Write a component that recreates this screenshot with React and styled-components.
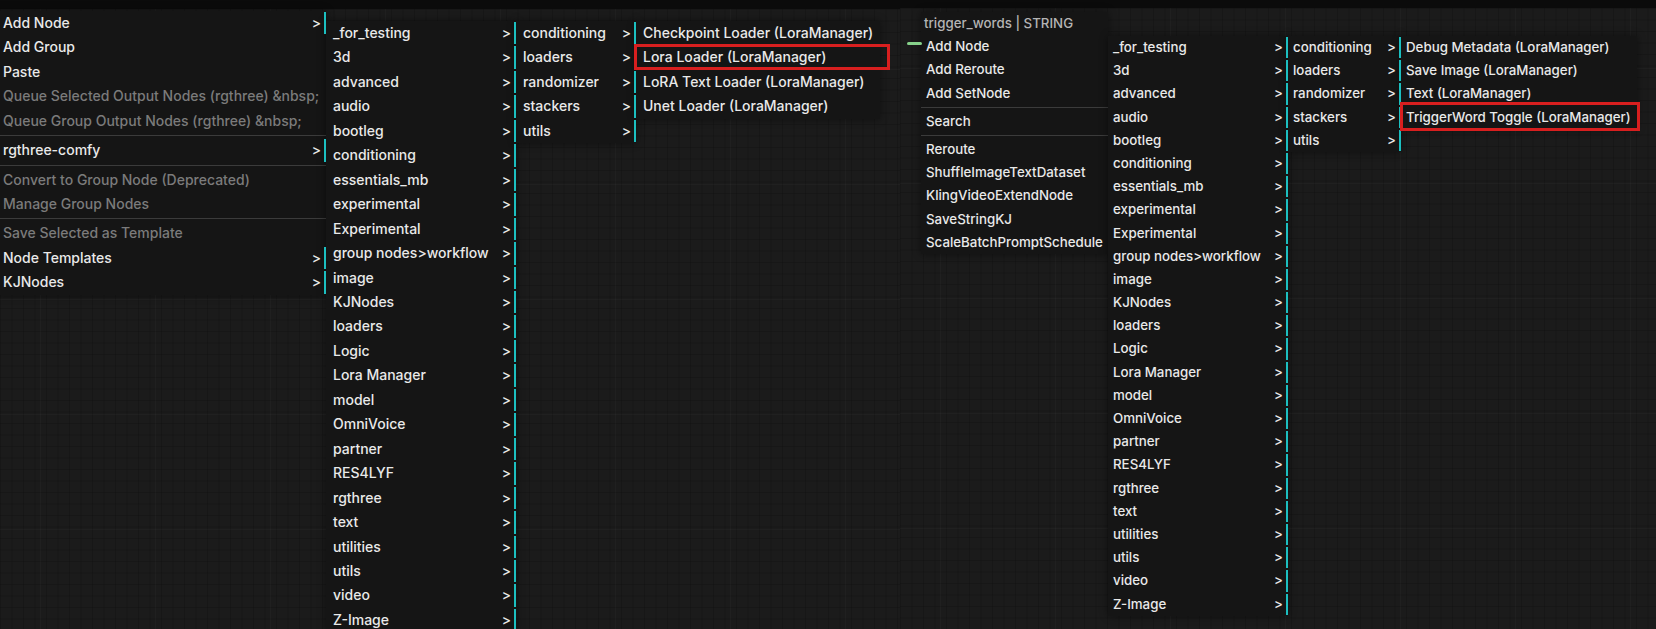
import React from 'react';
import styled, { createGlobalStyle, css, ThemeProvider } from 'styled-components';

const GlobalStyle = createGlobalStyle`
  html, body {
    margin: 0;
    padding: 0;
    background: #1a1a1a;
    overflow: hidden;
  }
  body {
    font-family: Inter, "Liberation Sans", sans-serif;
  }
`;

const Screen = styled.div`
  display: flex;
  width: 1656px;
  height: 629px;
  overflow: hidden;
`;

const Pane = styled.div`
  position: relative;
  flex: 0 0 ${(p) => p.width}px;
  display: flex;
  flex-direction: column;
  height: 100%;
  overflow: hidden;
`;

const TopBand = styled.div`
  flex: 0 0 ${(p) => p.height}px;
  background: #0b0b0b;
`;

const Canvas = styled.div`
  position: relative;
  flex: 1;
  display: flex;
  align-items: flex-start;
  padding-left: ${(p) => p.inset}px;
  background-color: #1b1b1b;
  background-image:
    linear-gradient(rgba(255, 255, 255, 0.025) 1px, transparent 1px),
    linear-gradient(90deg, rgba(255, 255, 255, 0.025) 1px, transparent 1px),
    linear-gradient(rgba(0, 0, 0, 0.14) 1px, transparent 1px),
    linear-gradient(90deg, rgba(0, 0, 0, 0.14) 1px, transparent 1px);
  background-size: 115px 115px, 115px 115px, 11.5px 11.5px, 11.5px 11.5px;
  background-position: 40px 60px, 40px 60px, 0 0, 0 0;
`;

const Menu = styled.div`
  flex: 0 0 ${(p) => p.w}px;
  margin-top: ${(p) => p.top}px;
  margin-left: ${(p) => p.shift || 0}px;
  background: #151515;
  box-shadow: 0 0 8px rgba(0, 0, 0, 0.45);
  font-size: ${(p) => p.theme.fs}px;
  font-weight: 500;
`;

const Title = styled.div`
  height: ${(p) => p.theme.rh}px;
  line-height: ${(p) => p.theme.rh}px;
  padding-left: 3px;
  color: #b4b4b4;
  white-space: nowrap;
`;

const Entry = styled.div`
  position: relative;
  height: ${(p) => p.theme.rh}px;
  line-height: ${(p) => p.theme.rh}px;
  padding-left: ${(p) => p.theme.pad}px;
  color: ${(p) => (p.disabled ? '#7b7b7b' : '#e9e9e9')};
  white-space: nowrap;

  ${(p) =>
    p.sub &&
    css`
      &::after {
        content: '';
        position: absolute;
        right: 0;
        top: 1px;
        bottom: 1px;
        width: 2px;
        background: #1cbfc0;
      }
    `}
`;

const Arrow = styled.span`
  position: absolute;
  top: 0;
  right: ${(p) => p.theme.arrow}px;
  color: #e9e9e9;
`;

const Separator = styled.div`
  height: 0;
  margin: 2px 0;
  border-top: 1px solid #3b3b3b;
`;

const Marker = styled.div`
  position: absolute;
  left: ${(p) => p.box[0]}px;
  top: ${(p) => p.box[1]}px;
  right: ${(p) => p.box[2]}px;
  bottom: ${(p) => p.box[3]}px;
  border: 3px solid #d81f1f;
  pointer-events: none;
`;

const Wire = styled.div`
  position: absolute;
  left: 7px;
  top: 34px;
  width: 15px;
  height: 3px;
  border-radius: 2px;
  background: #86d18a;
`;

const leftTheme = { rh: 24.46, fs: 14, pad: 7, arrow: 5 };
const rightTheme = { rh: 23.2, fs: 13.3, pad: 5, arrow: 5 };

const categories = [
  '_for_testing',
  '3d',
  'advanced',
  'audio',
  'bootleg',
  'conditioning',
  'essentials_mb',
  'experimental',
  'Experimental',
  'group nodes>workflow',
  'image',
  'KJNodes',
  'loaders',
  'Logic',
  'Lora Manager',
  'model',
  'OmniVoice',
  'partner',
  'RES4LYF',
  'rgthree',
  'text',
  'utilities',
  'utils',
  'video',
  'Z-Image',
];

const loraGroups = ['conditioning', 'loaders', 'randomizer', 'stackers', 'utils'];

const canvasMenu = [
  { label: 'Add Node', sub: true },
  { label: 'Add Group' },
  { label: 'Paste' },
  { label: 'Queue Selected Output Nodes (rgthree) &nbsp;', disabled: true },
  { label: 'Queue Group Output Nodes (rgthree) &nbsp;', disabled: true },
  'sep',
  { label: 'rgthree-comfy', sub: true },
  'sep',
  { label: 'Convert to Group Node (Deprecated)', disabled: true },
  { label: 'Manage Group Nodes', disabled: true },
  'sep',
  { label: 'Save Selected as Template', disabled: true },
  { label: 'Node Templates', sub: true },
  { label: 'KJNodes', sub: true },
];

const slotMenu = [
  { label: 'Add Node' },
  { label: 'Add Reroute' },
  { label: 'Add SetNode' },
  'sep',
  { label: 'Search' },
  'sep',
  { label: 'Reroute' },
  { label: 'ShuffleImageTextDataset' },
  { label: 'KlingVideoExtendNode' },
  { label: 'SaveStringKJ' },
  { label: 'ScaleBatchPromptSchedule' },
];

const loaderNodes = [
  { label: 'Checkpoint Loader (LoraManager)' },
  { label: 'Lora Loader (LoraManager)', marked: [-2, -1, -10, 0] },
  { label: 'LoRA Text Loader (LoraManager)' },
  { label: 'Unet Loader (LoraManager)' },
];

const utilNodes = [
  { label: 'Debug Metadata (LoraManager)' },
  { label: 'Save Image (LoraManager)' },
  { label: 'Text (LoraManager)' },
  { label: 'TriggerWord Toggle (LoraManager)', marked: [-1, -4, -3, -2] },
];

function MenuItems({ items }) {
  return items.map((item, i) =>
    item === 'sep' ? (
      <Separator key={i} />
    ) : (
      <Entry key={i} sub={item.sub} disabled={item.disabled}>
        {item.label}
        {item.sub && <Arrow>&gt;</Arrow>}
        {item.marked && <Marker box={item.marked} />}
      </Entry>
    )
  );
}

const asSubmenus = (labels) => labels.map((label) => ({ label, sub: true }));

export default function App() {
  return (
    <Screen>
      <GlobalStyle />
      <ThemeProvider theme={leftTheme}>
        <Pane width={900}>
          <TopBand height={9} />
          <Canvas inset={0}>
            <Menu w={330} top={1.8} shift={-4}>
              <MenuItems items={canvasMenu} />
            </Menu>
            <Menu w={190} top={12}>
              <MenuItems items={asSubmenus(categories)} />
            </Menu>
            <Menu w={120} top={12}>
              <MenuItems items={asSubmenus(loraGroups)} />
            </Menu>
            <Menu w={244} top={12}>
              <MenuItems items={loaderNodes} />
            </Menu>
          </Canvas>
        </Pane>
      </ThemeProvider>
      <ThemeProvider theme={rightTheme}>
        <Pane width={756}>
          <TopBand height={8} />
          <Canvas inset={21}>
            <Wire />
            <Menu w={187} top={4}>
              <Title>trigger_words | STRING</Title>
              <MenuItems items={slotMenu} />
            </Menu>
            <Menu w={180} top={28}>
              <MenuItems items={asSubmenus(categories)} />
            </Menu>
            <Menu w={113} top={28}>
              <MenuItems items={asSubmenus(loraGroups)} />
            </Menu>
            <Menu w={236} top={28}>
              <MenuItems items={utilNodes} />
            </Menu>
          </Canvas>
        </Pane>
      </ThemeProvider>
    </Screen>
  );
}
